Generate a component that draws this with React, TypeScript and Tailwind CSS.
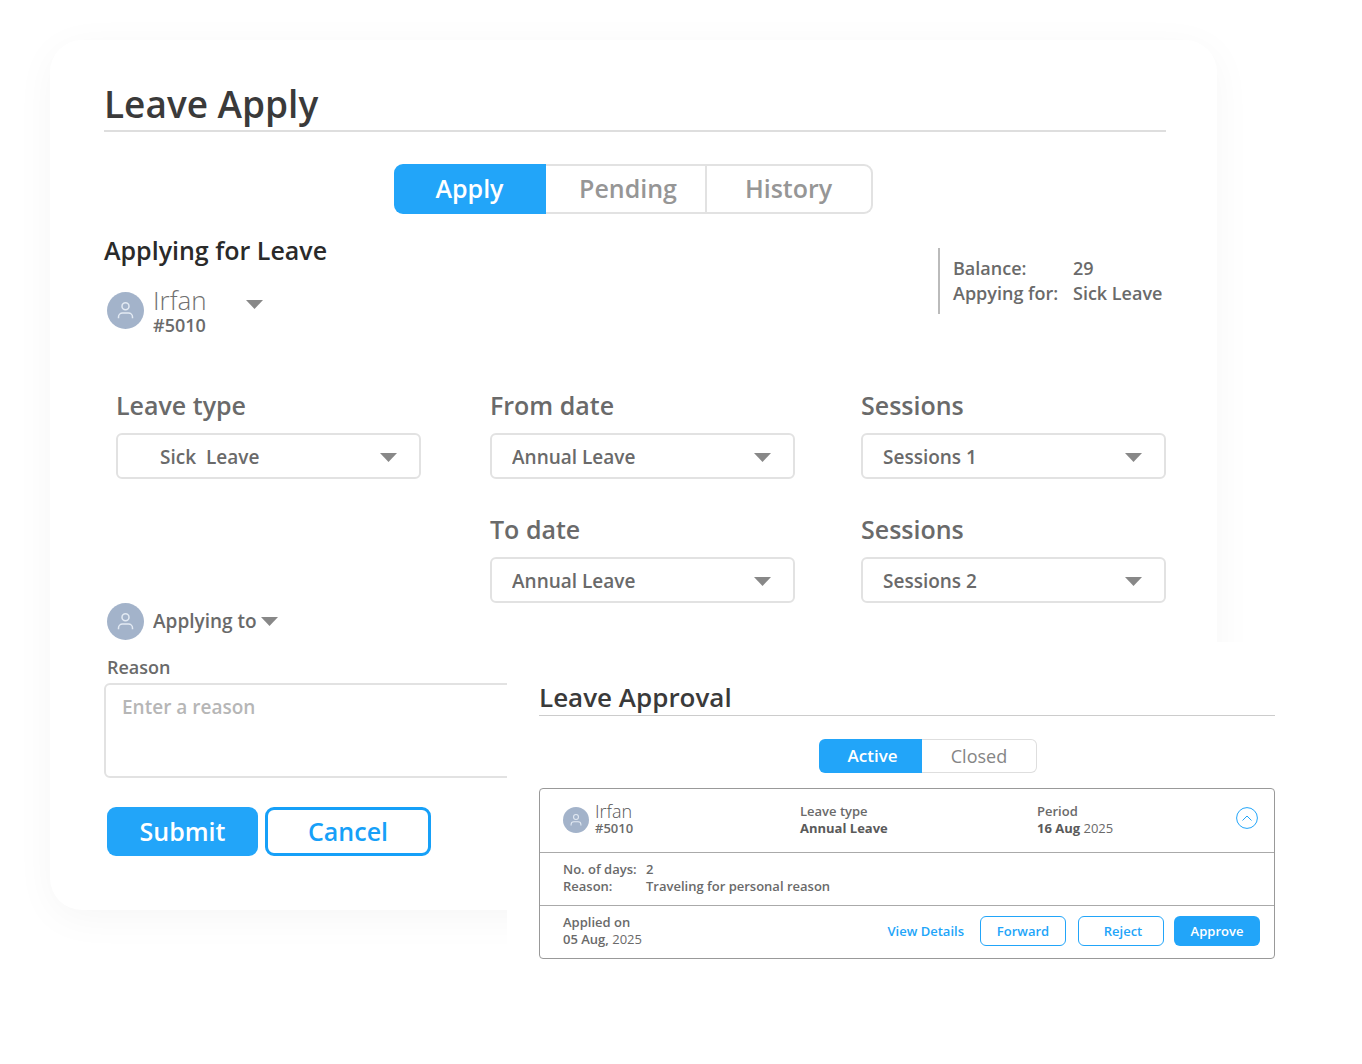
import { SelectHTMLAttributes, useState } from 'react'
import clsx from 'clsx'

const Caret = ({ className }: { className?: string }) => (
  <svg viewBox="0 0 17 9" className={clsx('pointer-events-none h-[9px] w-[17px] fill-[#888]', className)} aria-hidden="true">
    <path d="M0 0h17L8.500 9z" />
  </svg>
)

const Avatar = ({ className }: { className?: string }) => (
  <svg viewBox="0 0 37 37" className={clsx('shrink-0', className)} aria-hidden="true">
    <circle cx="18.500" cy="18.500" r="18.500" fill="#a3b3ca" />
    <g fill="none" stroke="#e3eaf3" strokeWidth="1.500">
      <circle cx="18.500" cy="14.300" r="3.500" />
      <path d="M11.500 26.300v-1.300a4 4 0 0 1 4-4h6a4 4 0 0 1 4 4v1.300" />
    </g>
  </svg>
)

interface FieldProps extends SelectHTMLAttributes<HTMLSelectElement> {
  id: string
  label: string
  options: string[]
  indent?: boolean
}

const Field = ({ id, label, options, indent, className, ...props }: FieldProps) => (
  <div className={className}>
    <label htmlFor={id} className="block text-[25px] leading-8 font-semibold text-[#6a6a6a]">
      {label}
    </label>
    <div className="relative mt-3">
      <select
        id={id}
        className={clsx(
          'h-[46px] w-full appearance-none rounded-md border-2 border-[#e2e2e2] bg-white pt-0.5 pr-12 text-[19px] font-semibold text-[#6a6a6a]',
          indent ? 'pl-[42px]' : 'pl-5'
        )}
        {...props}
      >
        {options.map((option) => (
          <option key={option}>{option}</option>
        ))}
      </select>
      <Caret className="absolute top-5 right-6" />
    </div>
  </div>
)

const tabs = [
  { name: 'Apply', width: 'w-[152px]' },
  { name: 'Pending', width: 'w-[161px] pl-1.5' },
  { name: 'History', width: 'w-[166px]' },
]

function LeaveApply() {
  const [tab, setTab] = useState('Apply')

  return (
    <section className="mr-[145px] ml-[50px] rounded-[32px] bg-white pt-[38px] pr-[51px] pb-[54px] pl-[54px] shadow-[0_8px_40px_rgba(0,0,0,0.04)]">
      <h1 className="border-b-2 border-[#dedede] text-[37px] leading-[52px] font-semibold text-[#3a3a3a]">Leave Apply</h1>

      <div className="mt-8 flex justify-center pr-1">
        {tabs.map(({ name, width }) => (
          <button
            key={name}
            type="button"
            onClick={() => setTab(name)}
            className={clsx(
              'h-[50px] border-[#e2e2e2] text-[25px] font-semibold first:rounded-l-[9px] last:rounded-r-[9px]',
              width,
              tab === name ? 'bg-[#22a5f9] text-white' : 'border-y-2 border-r-2 text-[#969696]'
            )}
          >
            {name}
          </button>
        ))}
      </div>

      <div className="mt-5 flex items-start justify-between">
        <div>
          <h2 className="text-[25px] leading-8 font-semibold text-[#2a2a2a]">Applying for Leave</h2>
          <div className="mt-[19px] flex items-center gap-[9px] pl-[3px]">
            <Avatar className="size-[37px]" />
            <div>
              <div className="relative w-[110px]">
                <select aria-label="Employee" className="block h-[30px] w-full appearance-none text-[26px] leading-[30px] font-light text-[#707070]">
                  <option>Irfan</option>
                </select>
                <Caret className="absolute right-0 bottom-1.5" />
              </div>
              <p className="text-[18px] leading-5 font-semibold text-[#6a6a6a]">#5010</p>
            </div>
          </div>
        </div>
        <dl className="mt-3.5 grid w-[228px] grid-cols-[120px_auto] border-l-2 border-[#bbb] py-2 pl-[13px] text-[18px] leading-[25px] font-semibold text-[#6a6a6a]">
          <dt>Balance:</dt>
          <dd>29</dd>
          <dt>Appying for:</dt>
          <dd>Sick Leave</dd>
        </dl>
      </div>

      <div className="mt-[54px] grid grid-cols-[308fr_305fr_305fr] gap-x-[66px] gap-y-[34px] pl-3">
        <Field id="leave-type" label="Leave type" options={['Sick\u00a0\u00a0Leave']} indent className="mr-[3px]" />
        <Field id="from-date" label="From date" options={['Annual Leave']} />
        <Field id="from-session" label="Sessions" options={['Sessions 1']} />
        <Field id="to-date" label="To date" options={['Annual Leave']} className="col-start-2" />
        <Field id="to-session" label="Sessions" options={['Sessions 2']} />
      </div>

      <div className="flex items-center gap-[9px] pl-[3px]">
        <Avatar className="size-[37px]" />
        <div className="relative w-[125px]">
          <select aria-label="Applying to" className="block h-[37px] w-full appearance-none text-[19px] font-semibold text-[#6a6a6a]">
            <option>Applying to</option>
          </select>
          <Caret className="absolute top-3.5 right-0" />
        </div>
      </div>

      <label htmlFor="reason" className="mt-[15px] block pl-[3px] text-[18px] leading-6 font-semibold text-[#6a6a6a]">
        Reason
      </label>
      <textarea
        id="reason"
        placeholder="Enter a reason"
        className="mt-1 block h-[95px] w-full resize-none rounded-md border-2 border-[#e2e2e2] px-4 py-2.5 text-[19px] leading-6 font-semibold placeholder:text-[#b6b6b6]"
      />

      <div className="mt-[29px] flex gap-[7px] pl-[3px]">
        <button type="submit" className="h-[49px] w-[151px] rounded-[9px] bg-[#22a5f9] text-[25px] font-semibold text-white">
          Submit
        </button>
        <button type="button" className="h-[49px] w-[166px] rounded-[9px] border-3 border-[#16a0f8] text-[25px] font-semibold text-[#16a0f8]">
          Cancel
        </button>
      </div>
    </section>
  )
}

const outlineButton = 'h-[30px] w-[86px] rounded-md border border-[#22a5f9] text-[#22a5f9]'

function LeaveApproval() {
  const [tab, setTab] = useState('Active')

  return (
    <section className="relative -mt-[268px] ml-[507px] bg-white pt-[37px] pr-[87px] pb-[105px] pl-8">
      <h2 className="border-b border-[#ccc] text-[26px] leading-9 font-semibold text-[#3a3a3a]">Leave Approval</h2>

      <div className="mt-[23px] flex justify-center pl-[42px]">
        {['Active', 'Closed'].map((name) => (
          <button
            key={name}
            type="button"
            onClick={() => setTab(name)}
            className={clsx(
              'h-[34px] border-[#dedede] first:w-[103px] first:rounded-l-md first:pl-1 last:w-[115px] last:rounded-r-md',
              tab === name ? 'bg-[#22a5f9] text-[17px] font-semibold text-white' : 'border-y border-r text-[18px] text-[#858585]'
            )}
          >
            {name}
          </button>
        ))}
      </div>

      <article className="mt-[15px] divide-y divide-[#aaa] rounded-sm border border-[#999] text-[13px] leading-[17px] font-semibold text-[#6a6a6a]">
        <div className="grid h-16 grid-cols-[237fr_237fr_221fr] items-center pr-4 pb-0.5 pl-[23px]">
          <div className="flex items-center gap-1.5">
            <Avatar className="size-[26px]" />
            <div>
              <p className="text-[18px] font-light text-[#555]">Irfan</p>
              <p>#5010</p>
            </div>
          </div>
          <div>
            <p>Leave type</p>
            <p className="font-bold text-[#5a5a5a]">Annual Leave</p>
          </div>
          <div className="flex items-start justify-between">
            <div>
              <p>Period</p>
              <p>
                <span className="font-bold text-[#5a5a5a]">16 Aug</span> <span className="font-normal">2025</span>
              </p>
            </div>
            <button type="button" aria-label="Collapse" className="pt-1">
              <svg viewBox="0 0 22 22" className="block size-[22px] fill-none stroke-[#22a5f9]">
                <circle cx="11" cy="11" r="10.400" />
                <path d="M6.500 13.500 11 9l4.500 4.500" />
              </svg>
            </button>
          </div>
        </div>

        <dl className="grid grid-cols-[83px_1fr] px-[23px] pt-2 pb-2.5">
          <dt>No. of days:</dt>
          <dd>2</dd>
          <dt>Reason:</dt>
          <dd>Traveling for personal reason</dd>
        </dl>

        <div className="flex h-[52px] items-center justify-between pr-3.5 pb-0.5 pl-[23px]">
          <div>
            <p>Applied on</p>
            <p>
              05 Aug, <span className="font-normal">2025</span>
            </p>
          </div>
          <div className="flex items-center">
            <a href="#details" className="mr-4 text-[#22a5f9]">
              View Details
            </a>
            <button type="button" className={clsx(outlineButton, 'mr-3')}>
              Forward
            </button>
            <button type="button" className={clsx(outlineButton, 'mr-2.5 pl-1')}>
              Reject
            </button>
            <button type="button" className="h-[30px] w-[86px] rounded-md bg-[#22a5f9] text-white">
              Approve
            </button>
          </div>
        </div>
      </article>
    </section>
  )
}

export default function App() {
  return (
    <main className="min-h-screen bg-white pt-10 font-['Open_Sans',sans-serif]">
      <LeaveApply />
      <LeaveApproval />
    </main>
  )
}
